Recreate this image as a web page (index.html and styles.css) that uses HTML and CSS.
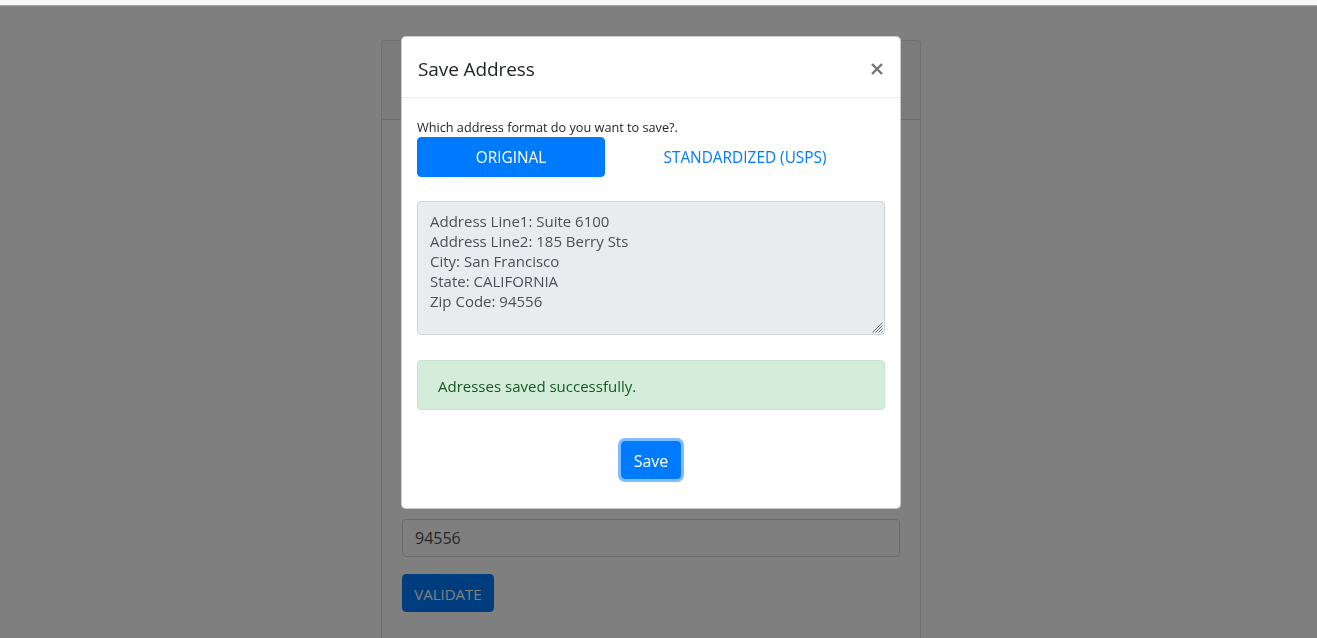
FILE: index.html
```html
<!DOCTYPE html>
<html lang="en">
<head>
<meta charset="utf-8">
<title>Save Address</title>
<link rel="stylesheet" href="styles.css">
</head>
<body class="modal-open">
  <div class="topbar"></div>

  <div class="container">
    <div class="card">
      <div class="card-header"></div>
      <div class="card-body">
        <div class="form-group">
          <div class="label"></div>
          <input class="form-control" type="text" aria-label="Address Line1">
        </div>
        <div class="form-group">
          <div class="label"></div>
          <input class="form-control" type="text" aria-label="Address Line2">
        </div>
        <div class="form-group">
          <div class="label"></div>
          <input class="form-control" type="text" aria-label="City">
        </div>
        <div class="form-group">
          <div class="label"></div>
          <input class="form-control" type="text" aria-label="State">
        </div>
        <div class="form-group">
          <div class="label"></div>
          <input class="form-control" type="text" value="94556" aria-label="Zip Code">
        </div>
        <button class="btn btn-primary btn-upper btn-validate" type="button">Validate</button>
      </div>
    </div>
  </div>

  <div class="backdrop"></div>

  <div class="modal">
    <div class="modal-dialog">
      <div class="modal-content">
        <div class="modal-header">
          <h5 class="modal-title">Save Address</h5>
          <button class="close" type="button" aria-label="Close">
            <svg width="12" height="12" viewBox="0 0 12 12" aria-hidden="true">
              <path d="M1 1 L11 11 M11 1 L1 11" stroke="currentColor" stroke-width="2.4" fill="none"/>
            </svg>
          </button>
        </div>
        <div class="modal-body">
          <p class="prompt">Which address format do you want to save?.</p>
          <div class="format-row">
            <button class="btn btn-primary btn-format" type="button">Original</button>
            <button class="btn btn-link btn-format" type="button">Standardized (USPS)</button>
          </div>
          <div class="address-wrap">
            <textarea class="address-box" readonly>Address Line1: Suite 6100
Address Line2: 185 Berry Sts
City: San Francisco
State: CALIFORNIA
Zip Code: 94556</textarea>
            <svg class="grip" width="12" height="12" viewBox="0 0 12 12" aria-hidden="true">
              <path d="M11.5 1.5 L1.5 11.5 M11.5 4.5 L4.5 11.5 M11.5 7.5 L7.5 11.5 M11.5 10.5 L10.5 11.5" stroke="#6f6f6f" stroke-width="1" fill="none"/>
            </svg>
          </div>
          <div class="alert alert-success">Adresses saved successfully.</div>
          <div class="actions">
            <button class="btn btn-primary btn-save" type="button">Save</button>
          </div>
        </div>
      </div>
    </div>
  </div>
</body>
</html>
```

FILE: styles.css
```css
* {
  box-sizing: border-box;
}

html, body {
  margin: 0;
  height: 100%;
}

body {
  font-family: "Open Sans", "Noto Sans", "Liberation Sans", sans-serif;
  font-size: 16px;
  line-height: 1.5;
  color: #212529;
  background: #ffffff;
  padding-right: 15px;
  overflow: hidden;
}

.topbar {
  position: fixed;
  top: 0;
  left: 0;
  right: 0;
  height: 6px;
  background: #f7f7f9;
  border-bottom: 1px solid #a4a4a6;
  z-index: 1100;
}

.container {
  width: 1140px;
  margin: 0 auto;
  padding-top: 40px;
}

.card {
  width: 540px;
  margin-left: 300px;
  border: 1px solid rgba(0, 0, 0, 0.125);
  border-radius: 4px;
  background: #fff;
  min-height: 700px;
}

.card-header {
  height: 79px;
  padding: 12px 20px;
  background: rgba(0, 0, 0, 0.03);
  border-bottom: 1px solid rgba(0, 0, 0, 0.125);
}

.card-body {
  padding: 23px 20px 20px;
}

.form-group {
  margin-bottom: 16px;
}

.label {
  height: 24px;
  margin-bottom: 8px;
}

.form-control {
  display: block;
  width: 100%;
  height: 38px;
  padding: 6px 12px;
  font: inherit;
  color: #495057;
  background: #fff;
  border: 1px solid #ced4da;
  border-radius: 4px;
}

.btn {
  display: inline-block;
  font-family: inherit;
  font-size: 16px;
  line-height: 24px;
  padding: 6px 12px;
  border: 1px solid transparent;
  border-radius: 4px;
  text-align: center;
  cursor: pointer;
}

.btn-primary {
  color: #fff;
  background: #007bff;
  border-color: #007bff;
}

.btn-link {
  color: #007bff;
  background: transparent;
}

.btn-upper {
  text-transform: uppercase;
}

.btn-validate {
  width: 92px;
  height: 38px;
  padding: 7px 0 5px;
  margin-top: 1px;
  font-size: 15px;
}

.backdrop {
  position: fixed;
  inset: 0;
  background: rgba(0, 0, 0, 0.5);
  z-index: 1040;
}

.modal {
  position: fixed;
  inset: 0;
  z-index: 1050;
  padding-right: 15px;
}

.modal-dialog {
  width: 500px;
  margin: 36px auto 0;
}

.modal-content {
  background: #fff;
  border: 1px solid rgba(0, 0, 0, 0.2);
  border-radius: 5px;
}

.modal-header {
  display: flex;
  align-items: center;
  justify-content: space-between;
  padding: 18px 16px 14px;
  border-bottom: 1px solid #e9ecef;
}

.modal-title {
  margin: 0;
  font-size: 19px;
  font-weight: 400;
  line-height: 28px;
  color: #212529;
  letter-spacing: -0.1px;
}

.close {
  display: flex;
  align-items: center;
  justify-content: center;
  width: 20px;
  height: 20px;
  padding: 0;
  margin-right: -3px;
  border: 0;
  background: transparent;
  color: #767676;
}

.modal-body {
  padding: 19px 15px 29px;
}

.prompt {
  margin: 0;
  font-size: 12.7px;
  line-height: 20px;
}

.format-row {
  display: flex;
  gap: 46px;
}

.btn-format {
  width: 188px;
  height: 40px;
  padding: 8px 4px 6px;
  font-size: 15.4px;
  text-transform: uppercase;
}

.address-wrap {
  position: relative;
  margin-top: 24px;
}

.address-box {
  display: block;
  width: 100%;
  height: 134px;
  padding: 9px 12px;
  font-family: inherit;
  font-size: 15px;
  line-height: 20px;
  color: #495057;
  background: #e9ecef;
  border: 1px solid #ced4da;
  border-radius: 4px;
  resize: none;
  outline: none;
}

.grip {
  position: absolute;
  right: 2px;
  bottom: 2px;
}

.alert {
  margin-top: 25px;
  padding: 13px 20px 11px;
  font-size: 15px;
  line-height: 24px;
  border: 1px solid transparent;
  border-radius: 4px;
}

.alert-success {
  color: #155724;
  background: #d4edda;
  border-color: #c3e6cb;
}

.actions {
  display: flex;
  justify-content: center;
  margin-top: 31px;
}

.btn-save {
  padding: 7px 12px 5px;
  box-shadow: 0 0 0 3px rgba(0, 123, 255, 0.5);
}
```
